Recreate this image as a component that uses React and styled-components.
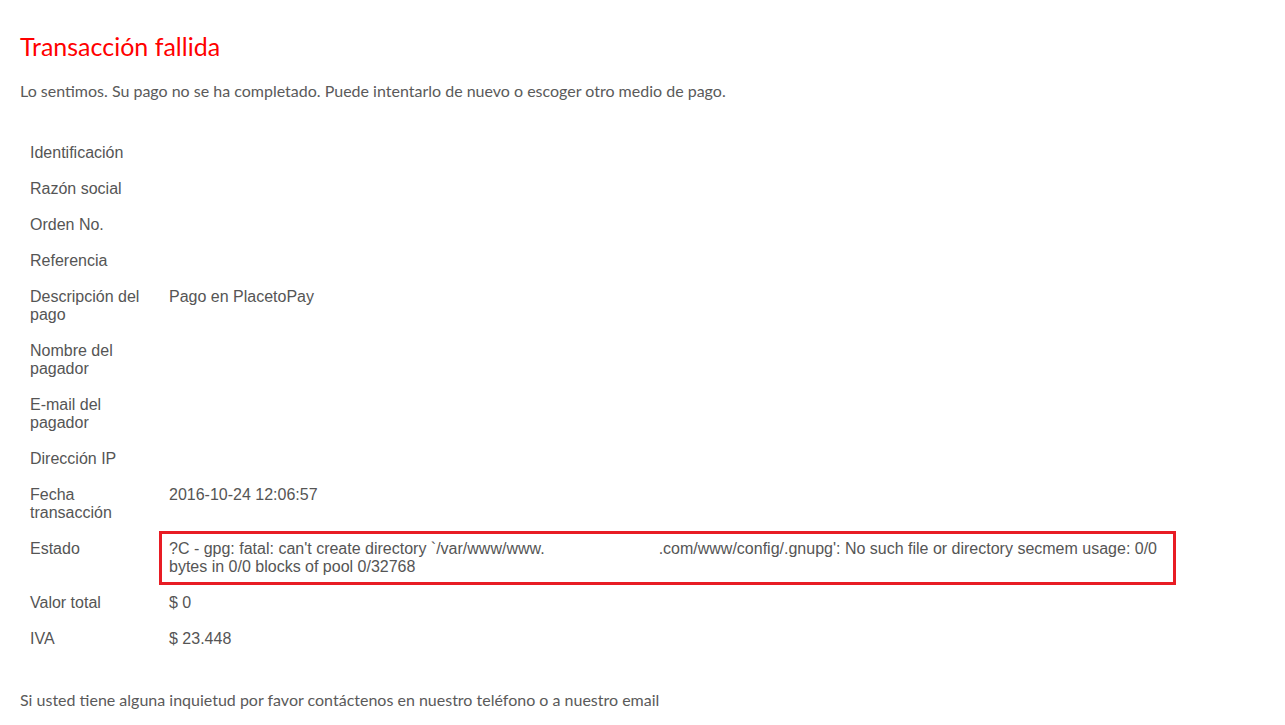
import styled, { createGlobalStyle } from "styled-components";

const GlobalStyle = createGlobalStyle`
    html, body {
        margin: 0;
        padding: 0;
        background: #ffffff;
    }
`

const rows = [
    { label: "Identificación", value: "" },
    { label: "Razón social", value: "" },
    { label: "Orden No.", value: "" },
    { label: "Referencia", value: "" },
    { label: "Descripción del pago", value: "Pago en PlacetoPay" },
    { label: "Nombre del pagador", value: "" },
    { label: "E-mail del pagador", value: "" },
    { label: "Dirección IP", value: "" },
    { label: "Fecha transacción", value: "2016-10-24 12:06:57" },
    { label: "Estado", status: true },
    { label: "Valor total", value: "$ 0" },
    { label: "IVA", value: "$ 23.448" },
];

export default function App() {
    return (
        <Page>
            <GlobalStyle />
            <Title>Transacción fallida</Title>
            <Message>Lo sentimos. Su pago no se ha completado. Puede intentarlo de nuevo o escoger otro medio de pago.</Message>
            <DetailTable>
                <tbody>
                    {rows.map(row => (
                        <tr key={row.label}>
                            <Label>{row.label}</Label>
                            {row.status ? (
                                <Value highlight>
                                    ?C - gpg: fatal: can't create directory `/var/www/www.<Redacted />.com/www/config/.gnupg': No such file or directory secmem usage: 0/0 bytes in 0/0 blocks of pool 0/32768
                                </Value>
                            ) : (
                                <Value>{row.value}</Value>
                            )}
                        </tr>
                    ))}
                </tbody>
            </DetailTable>
            <Message>Si usted tiene alguna inquietud por favor contáctenos en nuestro teléfono o a nuestro email</Message>
        </Page>
    );
}

const Page = styled.div`
    padding: 31px 20px 15px 20px;
    width: 1156px;
`
const Title = styled.h2`
    margin: 0 0 20px 0;
    font-family: 'Lato', sans-serif;
    font-weight: 400;
    font-size: 25px;
    line-height: 30px;
    color: #ff0000;
`
const Message = styled.p`
    margin: 0;
    font-family: 'Lato', sans-serif;
    font-size: 16px;
    line-height: 20px;
    color: #5a5a5a;
`
const DetailTable = styled.table`
    width: 100%;
    border-collapse: collapse;
    margin: 34px 0 33px 0;
    font-family: 'Liberation Sans', Arial, sans-serif;
    font-size: 16px;
    line-height: 18px;
    color: #555555;
`
const Label = styled.td`
    width: 119px;
    padding: 9px 10px;
    vertical-align: top;
`
const Value = styled.td`
    padding: 9px 10px;
    vertical-align: top;
    box-shadow: ${props => props.highlight ? 'inset 0 0 0 3px #e81c24' : 'none'};
`
const Redacted = styled.span`
    display: inline-block;
    width: 114px;
`
